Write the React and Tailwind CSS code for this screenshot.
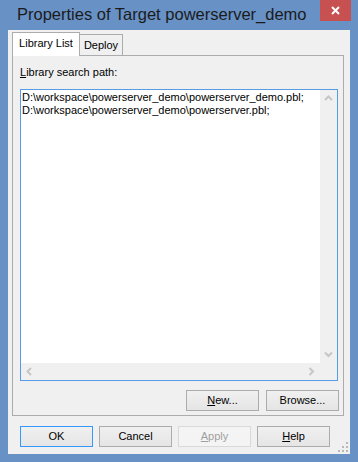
import React from 'react';

const font = "font-['Liberation_Sans',Arial,sans-serif]";

function Button({ children, kind = 'normal' }) {
  const look =
    kind === 'default'
      ? 'border-[#3399ff] text-black'
      : kind === 'disabled'
      ? 'border-[#d9d9d9] text-[#a0a0a0] from-[#f4f4f4] to-[#f4f4f4]'
      : 'border-[#acacac] text-black';
  return (
    <div
      className={`w-[73px] h-[21px] border bg-linear-to-b from-[#f0f0f0] to-[#e5e5e5] flex items-center justify-center text-[11px] leading-[13px] ${look}`}
    >
      {children}
    </div>
  );
}

function Chevron({ dir }) {
  const d = {
    up: 'M1 5 L4.5 1.5 L8 5',
    down: 'M1 1.5 L4.5 5 L8 1.5',
    left: 'M5 1 L1.5 4.5 L5 8',
    right: 'M1.5 1 L5 4.5 L1.5 8',
  }[dir];
  const size = dir === 'up' || dir === 'down' ? [9, 7] : [7, 9];
  return (
    <svg width={size[0]} height={size[1]} viewBox={`0 0 ${size[0]} ${size[1]}`}>
      <path d={d} fill="none" stroke="#c6c6c6" strokeWidth="2" />
    </svg>
  );
}

export default function App() {
  return (
    <div className={`w-[358px] h-[462px] bg-[#6891c6] flex flex-col ${font}`}>
      {/* title bar */}
      <div className="h-[30px] flex items-start shrink-0">
        <div className="ml-[17px] mt-[4px] text-[16.5px] leading-[20px] text-[#1b1b1b] whitespace-nowrap">
          Properties of Target powerserver_demo
        </div>
        <div className="ml-auto mr-[7px] w-[31px] h-[21px] bg-[#c75050] flex items-center justify-center">
          <svg width="9" height="9" viewBox="0 0 9 9">
            <path d="M1 1 L8 8 M8 1 L1 8" stroke="#fff" strokeWidth="2" />
          </svg>
        </div>
      </div>

      {/* client */}
      <div className="relative mx-[8px] h-[424px] bg-[#f0f0f0] px-[4px] pt-[2px] flex flex-col">
        {/* tabs */}
        <div className="relative z-10 -mb-px h-[24px] flex items-start text-[11px] leading-[13px] text-black">
          <div className="w-[68px] h-[24px] bg-white border-l border-t border-r border-[#acacac] flex justify-center pt-[4px]">
            Library List
          </div>
          <div className="mt-[2px] w-[43px] h-[21px] bg-[#f0f0f0] border-t border-r border-[#acacac] flex justify-center pt-[4px]">
            Deploy
          </div>
        </div>

        {/* tab page */}
        <div className="w-[332px] h-[361px] border border-[#acacac] bg-[#f0f0f0] pl-[7px] pr-[4px] pt-[10px] flex flex-col">
          <div className="h-[13px] text-[11px] leading-[13px] text-black">
            <span className="underline">L</span>ibrary search path:
          </div>

          {/* list box */}
          <div className="mt-[10px] w-[318px] h-[292px] border border-[#569de5] flex flex-col">
            <div className="flex h-[273px]">
              <div className="flex-1 bg-white pl-[1px] pt-[1px] text-[11px] leading-[13px] text-black whitespace-pre">
                <div>D:\workspace\powerserver_demo\powerserver_demo.pbl;</div>
                <div>D:\workspace\powerserver_demo\powerserver.pbl;</div>
              </div>
              <div className="w-[17px] bg-[#f0f0f0] flex flex-col justify-between">
                <div className="h-[17px] flex items-center justify-center">
                  <Chevron dir="up" />
                </div>
                <div className="h-[17px] flex items-center justify-center">
                  <Chevron dir="down" />
                </div>
              </div>
            </div>
            <div className="flex h-[17px] bg-[#f0f0f0]">
              <div className="flex-1 flex justify-between">
                <div className="w-[17px] flex items-center justify-center">
                  <Chevron dir="left" />
                </div>
                <div className="w-[17px] flex items-center justify-center">
                  <Chevron dir="right" />
                </div>
              </div>
              <div className="w-[17px]" />
            </div>
          </div>

          <div className="mt-[9px] flex justify-end gap-[7px]">
            <Button>
              <span className="underline">N</span>ew...
            </Button>
            <Button>Browse...</Button>
          </div>
        </div>

        {/* dialog buttons */}
        <div className="mt-[10px] ml-[8px] flex gap-[6px]">
          <Button kind="default">OK</Button>
          <Button>Cancel</Button>
          <Button kind="disabled">
            <span className="underline">A</span>pply
          </Button>
          <Button>
            <span className="underline">H</span>elp
          </Button>
        </div>

        {/* size grip */}
        <svg className="absolute right-[2px] bottom-[2px]" width="10" height="10" viewBox="0 0 10 10">
          <g fill="#b8b8b8">
            <rect x="8" y="0" width="2" height="2" />
            <rect x="4" y="4" width="2" height="2" />
            <rect x="8" y="4" width="2" height="2" />
            <rect x="0" y="8" width="2" height="2" />
            <rect x="4" y="8" width="2" height="2" />
            <rect x="8" y="8" width="2" height="2" />
          </g>
        </svg>
      </div>
    </div>
  );
}
